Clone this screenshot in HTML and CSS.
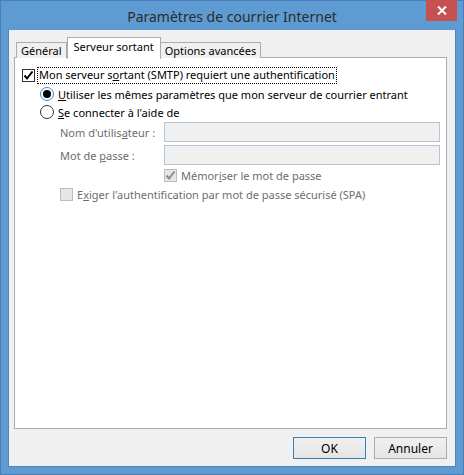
FILE: index.html
```html
<!DOCTYPE html>
<html lang="fr">
<head>
<meta charset="utf-8">
<title>Paramètres de courrier Internet</title>
<link rel="stylesheet" href="styles.css">
</head>
<body>
<div class="window">
  <div class="titlebar">
    <div class="title">Paramètres de courrier Internet</div>
    <div class="close">
      <svg width="10" height="9" viewBox="0 0 10 9"><path d="M1 0.5 L9 8.5 M9 0.5 L1 8.5" stroke="#fff" stroke-width="2"/></svg>
    </div>
  </div>
  <div class="client">
    <div class="tabs">
      <div class="tab">Général</div>
      <div class="tab active">Serveur sortant</div>
      <div class="tab">Options avancées</div>
    </div>
    <div class="panel">
      <div class="row main-check">
        <span class="cb checked"><svg width="11" height="11" viewBox="0 0 11 11"><path d="M1.5 5.5 L4 8.5 L9.5 1.5" fill="none" stroke="#000" stroke-width="2"/></svg></span>
        <span class="focus">Mon serveur s<u>o</u>rtant (SMTP) requiert une authentification</span>
      </div>
      <div class="row radio-row">
        <span class="radio on"><span class="dot"></span></span>
        <span class="lbl"><u>U</u>tiliser les mêmes paramètres que mon serveur de courrier entrant</span>
      </div>
      <div class="row radio-row">
        <span class="radio"></span>
        <span class="lbl"><u>S</u>e connecter à l'aide de</span>
      </div>
      <div class="field">
        <span class="flabel">Nom d'utilis<u>a</u>teur :</span>
        <span class="input"></span>
      </div>
      <div class="field">
        <span class="flabel">Mot de <u>p</u>asse :</span>
        <span class="input"></span>
      </div>
      <div class="row remember">
        <span class="cb disabled"><svg width="11" height="11" viewBox="0 0 11 11"><path d="M1.5 5.5 L4 8.5 L9.5 1.5" fill="none" stroke="#8a8a8a" stroke-width="2"/></svg></span>
        <span class="lbl dis">Mémor<u>i</u>ser le mot de passe</span>
      </div>
      <div class="row spa">
        <span class="cb disabled"></span>
        <span class="lbl dis">E<u>x</u>iger l'authentification par mot de passe sécurisé (SPA)</span>
      </div>
    </div>
    <div class="buttons">
      <button class="btn default">OK</button>
      <button class="btn">Annuler</button>
    </div>
  </div>
</div>
</body>
</html>
```
FILE: styles.css
```css
* { box-sizing: border-box; }
html, body { margin: 0; padding: 0; }
body {
  width: 464px;
  height: 475px;
  font-family: "Noto Sans", "Open Sans", sans-serif;
  font-size: 11px;
  color: #000;
  overflow: hidden;
}
.window {
  width: 464px;
  height: 475px;
  background: #5e9bd2;
  border: 1px solid #4a7fb5;
  display: flex;
  flex-direction: column;
}
.titlebar {
  height: 30px;
  position: relative;
  display: flex;
  align-items: center;
  justify-content: center;
}
.title {
  font-size: 14px;
  color: #2b2b2b;
  margin-top: 2px;
}
.close {
  position: absolute;
  right: 6px;
  top: -1px;
  width: 31px;
  height: 21px;
  background: #c75050;
  display: flex;
  align-items: center;
  justify-content: center;
}
.client {
  flex: 1;
  margin: 0 7px 7px 7px;
  background: #f0f0f0;
  border: 1px solid #4f86bb;
  border-top-color: #5e9bd2;
  display: flex;
  flex-direction: column;
  padding: 6px 8px 7px 5px;
}
.tabs {
  display: flex;
  align-items: flex-end;
  padding-left: 2px;
  height: 21px;
  position: relative;
  z-index: 1;
}
.tab {
  height: 16px;
  border: 1px solid #acacac;
  border-bottom: none;
  background: #f0f0f0;
  padding: 0 4px;
  line-height: 15px;
  margin-bottom: -1px;
}
.tab + .tab { border-left: none; }
.tab.active {
  height: 22px;
  background: #fff;
  border-left: 1px solid #acacac;
  padding: 0 6px;
  line-height: 17px;
  margin-bottom: -2px;
}
.tab.active + .tab { border-left: none; }
.panel {
  height: 372px;
  background: #fff;
  border: 1px solid #acacac;
  padding: 8px 0 0 7px;
  display: flex;
  flex-direction: column;
}
.row {
  display: flex;
  align-items: center;
  height: 14px;
}
.main-check { height: 18px; }
.cb {
  width: 13px;
  height: 13px;
  border: 1px solid #333;
  background: #fff;
  display: flex;
  align-items: center;
  justify-content: center;
  flex: none;
}
.cb.disabled {
  border-color: #bcbcbc;
  background: #e6e6e6;
}
.focus {
  margin-left: 2px;
  padding: 0 1px 1px 1px;
  border: 1px dotted #000;
  line-height: 14px;
}
.radio-row { margin-left: 18px; }
.main-check + .radio-row { margin-top: 3px; }
.radio-row + .radio-row { margin-top: 4px; }
.radio {
  width: 14px;
  height: 14px;
  border: 1px solid #333;
  border-radius: 50%;
  background: #fff;
  display: flex;
  align-items: center;
  justify-content: center;
  flex: none;
}
.radio.on { border-color: #3c8ad8; }
.dot { width: 8px; height: 8px; border-radius: 50%; background: #000; }
.lbl { margin-left: 4px; white-space: nowrap; }
.dis { color: #6d6d6d; }
.field {
  display: flex;
  align-items: center;
  height: 20px;
  margin-left: 38px;
  margin-top: 3px;
}
.field + .field { margin-top: 3px; }
.flabel { width: 104px; color: #6d6d6d; white-space: nowrap; }
.input {
  width: 276px;
  height: 20px;
  background: #f0f0f0;
  border: 1px solid #b4c5d8;
}
.remember { margin-left: 142px; margin-top: 4px; height: 13px; }
.spa { margin-left: 38px; margin-top: 6px; height: 13px; }
.buttons {
  display: flex;
  justify-content: flex-end;
  gap: 8px;
  margin-top: 8px;
}
.btn {
  width: 73px;
  height: 22px;
  font-family: inherit;
  font-size: 12px;
  color: #000;
  background: linear-gradient(#f0f0f0, #e5e5e5);
  border: 1px solid #acacac;
  padding: 0;
}
.btn.default { border-color: #3c7fb1; }
```
